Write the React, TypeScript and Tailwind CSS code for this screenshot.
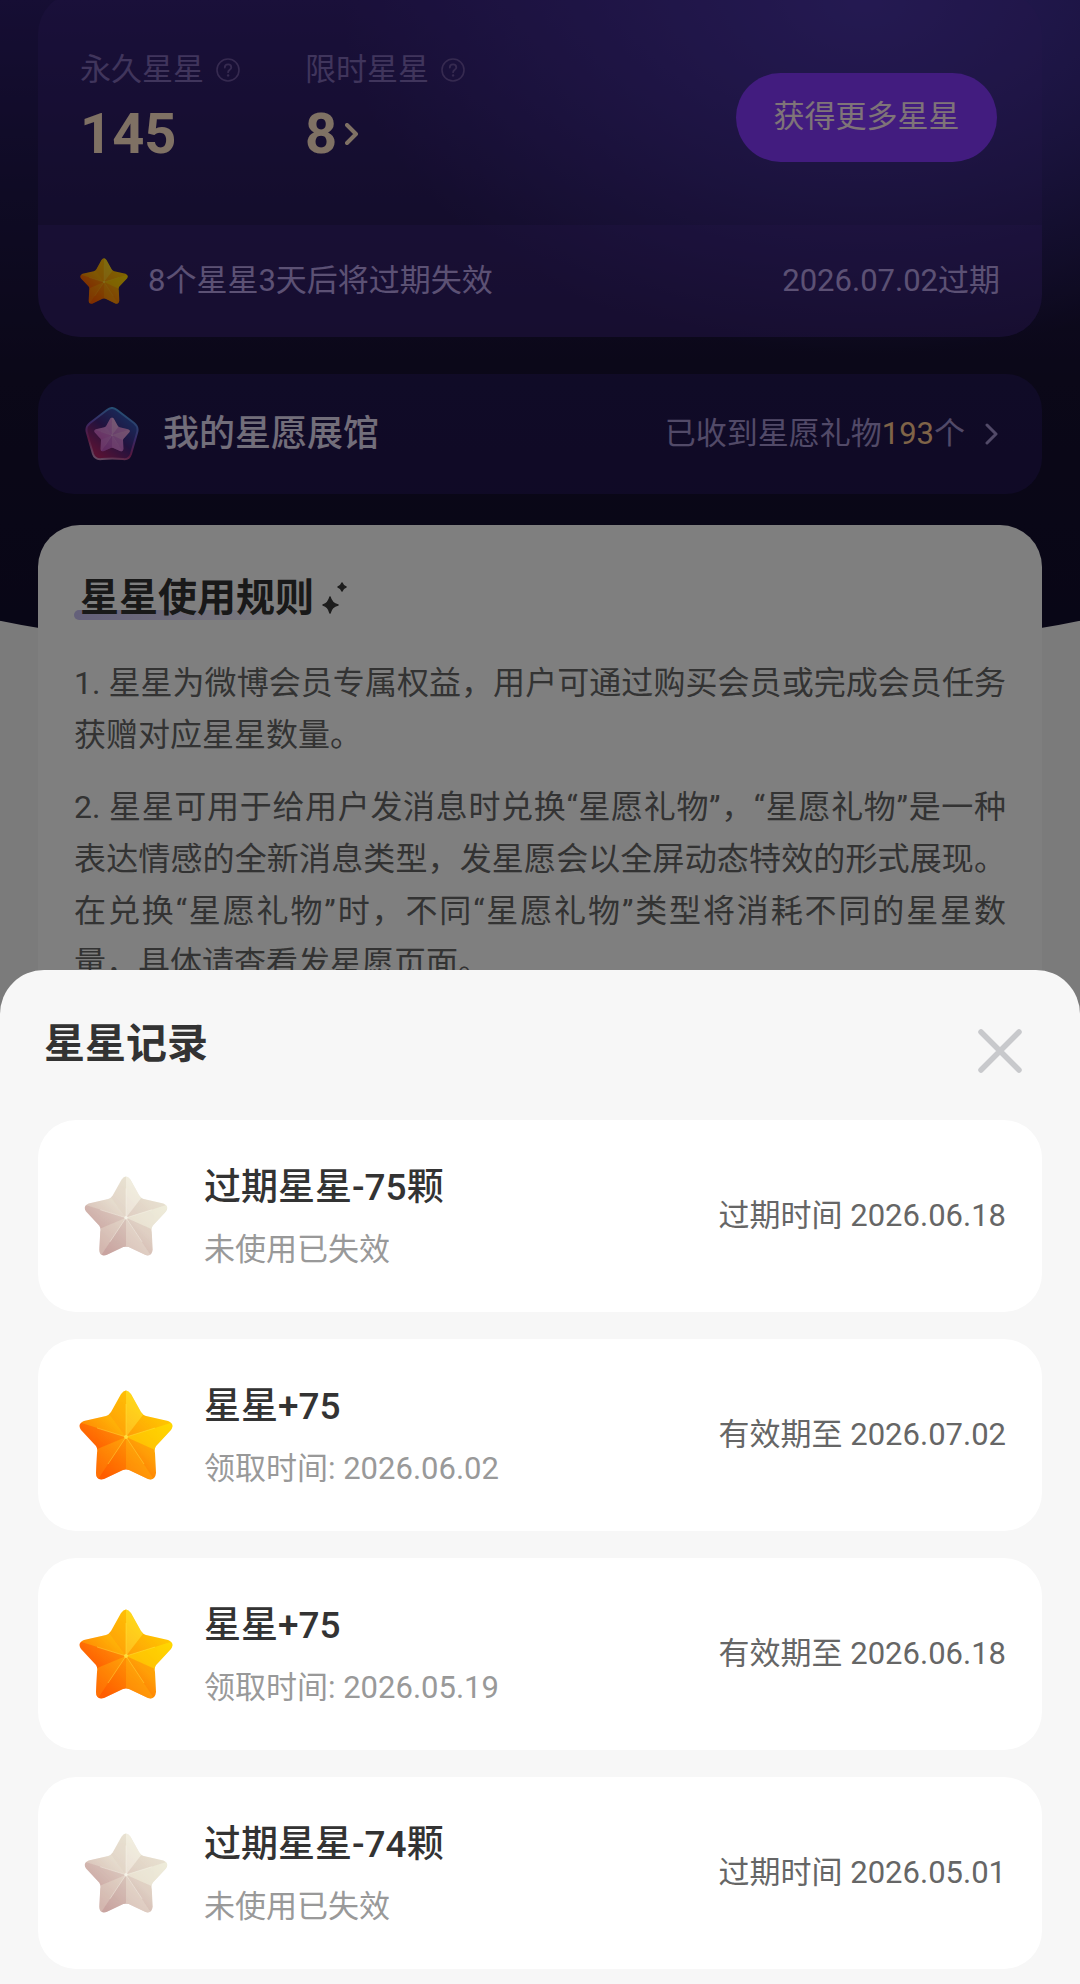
import React, { useId } from "react";

type StarTone = "gold" | "faded" | "pink";

const STAR_TONES: Record<StarTone, { from: string; mid: string; to: string; light: string; dark: string }> = {
  gold: { from: "#ffdc00", mid: "#ffa60a", to: "#ff4d00", light: "#ffec4a", dark: "#ff7a00" },
  faded: { from: "#efeedb", mid: "#e3d6c9", to: "#c9a29f", light: "#fbfaf0", dark: "#c8aaa2" },
  pink: { from: "#e8a8e0", mid: "#d884dc", to: "#d05cc4", light: "#f8d0f0", dark: "#a850c0" },
};

const StarIcon: React.FC<{ tone: StarTone; className?: string }> = ({ tone, className }) => {
  const id = useId();
  const t = STAR_TONES[tone];
  return (
    <svg viewBox="0 0 94 90" className={className} aria-hidden="true">
      <defs>
        <linearGradient id={`${id}-fill`} x1="0.8" y1="0.1" x2="0.12" y2="0.8">
          <stop offset="0" stopColor={t.from} />
          <stop offset="0.5" stopColor={t.mid} />
          <stop offset="1" stopColor={t.to} />
        </linearGradient>
        <clipPath id={`${id}-shape`}>
          <path d="M42 4Q47 -3 52 4L62 22Q64 25 67 26L89 31Q96 34 92 40L77 56Q75 59 76 63L77 83Q76 91 69 89L50 80Q47 79 44 80L25 89Q17 91 17 83L18 63Q19 59 17 56L2 40Q-2 34 5 31L27 26Q30 25 32 22Z" />
        </clipPath>
      </defs>
      <g clipPath={`url(#${id}-shape)`}>
        <rect width="94" height="90" fill={`url(#${id}-fill)`} />
        {/* Facets, clockwise from the top point */}
        <path d="M47 47L47 -4L64 25Z" fill={t.light} opacity="0.35" />
        <path d="M47 47L64 25L98 31Z" fill={t.dark} opacity="0.15" />
        <path d="M47 47L98 31L76 60Z" fill={t.from} opacity="0.5" />
        <path d="M47 47L76 60L78 94Z" fill={t.dark} opacity="0.15" />
        <path d="M47 47L78 94L47 79Z" fill={t.mid} opacity="0.5" />
        <path d="M47 47L47 79L16 94Z" fill={t.dark} opacity="0.35" />
        <path d="M47 47L16 94L18 59Z" fill={t.mid} opacity="0.4" />
        <path d="M47 47L18 59L-4 31Z" fill={t.to} opacity="0.25" />
        <path d="M47 47L-4 31L31 25Z" fill={t.from} opacity="0.2" />
        <path d="M47 47L31 25L47 -4Z" fill={t.mid} opacity="0.35" />
        <path
          d="M47 47V14M47 47L76 38M47 47L65 74M47 47L29 74M47 47L18 38"
          stroke={t.light}
          strokeWidth="1"
          opacity="0.4"
        />
        <circle cx="47" cy="47" r="2" fill={t.light} opacity="0.7" />
      </g>
    </svg>
  );
};

const GalleryIcon: React.FC = () => (
  <div className="relative h-[54px] w-[54px]">
    <svg viewBox="0 0 54 54" className="h-full w-full" aria-hidden="true">
      <defs>
        <linearGradient id="gem-edge" x1="0.7" y1="0" x2="0.3" y2="1">
          <stop offset="0" stopColor="#46a8e8" />
          <stop offset="0.45" stopColor="#7050c8" />
          <stop offset="0.75" stopColor="#b0307c" />
          <stop offset="1" stopColor="#c890c0" />
        </linearGradient>
        <linearGradient id="gem-body" x1="0.8" y1="0.1" x2="0.15" y2="0.85">
          <stop offset="0" stopColor="#3058b8" />
          <stop offset="0.5" stopColor="#43257c" />
          <stop offset="1" stopColor="#b02468" />
        </linearGradient>
      </defs>
      <path
        d="M22 3Q27 -1 32 3L49 16Q54 20 52 26L46 47Q44 53 38 52Q27 51 17 52Q10 53 8 47L2 26Q0 20 5 16Z"
        fill="url(#gem-body)"
        stroke="url(#gem-edge)"
        strokeWidth="2"
      />
    </svg>
    <StarIcon tone="pink" className="absolute left-[9px] top-[10px] h-[35px] w-[36px]" />
  </div>
);

const HelpIcon: React.FC = () => (
  <svg viewBox="0 0 24 24" className="h-6 w-6" fill="none" stroke="#6c54a0" aria-hidden="true">
    <circle cx="12" cy="12" r="11" strokeWidth="1.6" />
    <path
      d="M8.8 9.6C8.8 7.5 10 6.4 12.1 6.4S15.3 7.5 15.3 9.4C15.3 11.7 12.1 11.9 12.1 14.2"
      strokeWidth="1.8"
      strokeLinecap="round"
    />
    <circle cx="12.1" cy="17.4" r="1.2" fill="#6c54a0" stroke="none" />
  </svg>
);

const Chevron: React.FC<{ strokeWidth?: number }> = ({ strokeWidth = 3 }) => (
  <svg
    viewBox="0 0 14 22"
    className="h-[22px] w-[14px]"
    fill="none"
    stroke="currentColor"
    strokeWidth={strokeWidth}
    strokeLinecap="round"
    strokeLinejoin="round"
    aria-hidden="true"
  >
    <path d="M2 2L11 11L2 20" />
  </svg>
);

const SparkleIcon: React.FC = () => (
  <svg viewBox="0 0 26 32" className="h-8 w-[26px]" fill="#3a3a3a" stroke="#3a3a3a" strokeWidth="1.5" strokeLinejoin="round" aria-hidden="true">
    <path d="M8 15Q9.500 21.500 16 23Q9.500 24.500 8 31Q6.500 24.500 1 23Q6.500 21.500 8 15Z" />
    <path d="M20 1Q21 4 24 5Q21 6 20 9Q19 6 16 5Q19 4 20 1Z" />
  </svg>
);

interface StarRecord {
  title: string;
  note: string;
  date: string;
  expired: boolean;
}

const records: StarRecord[] = [
  { title: "过期星星-75颗", note: "未使用已失效", date: "过期时间 2026.06.18", expired: true },
  { title: "星星+75", note: "领取时间: 2026.06.02", date: "有效期至 2026.07.02", expired: false },
  { title: "星星+75", note: "领取时间: 2026.05.19", date: "有效期至 2026.06.18", expired: false },
  { title: "过期星星-74颗", note: "未使用已失效", date: "过期时间 2026.05.01", expired: true },
];

const BalanceCard: React.FC = () => (
  <section className="-mt-2 overflow-hidden rounded-[42px] bg-[#4a2a98]/25">
    <div className="flex h-[233px] items-start justify-between pl-[42px] pr-[45px] pt-[55px]">
      <div className="flex">
        <div className="w-[225px]">
          <button className="flex items-center gap-3 text-[31px] leading-[46px] text-[#806ab8]">
            永久星星
            <HelpIcon />
          </button>
          <p className="mt-2 text-[56px] font-bold leading-[66px] text-[#ffe2c8]">145</p>
        </div>
        <div>
          <button className="flex items-center gap-3 text-[31px] leading-[46px] text-[#806ab8]">
            限时星星
            <HelpIcon />
          </button>
          <button className="mt-2 flex items-center gap-2 text-[56px] font-bold leading-[66px] text-[#ffe2c8]">
            8
            <Chevron strokeWidth={4} />
          </button>
        </div>
      </div>
      <button className="mt-[26px] h-[89px] w-[261px] rounded-full bg-[#8438ff] text-[31px] text-[#ffe8f0]">
        获得更多星星
      </button>
    </div>
    <div className="flex h-[112px] items-center bg-[#4a2a98]/25 px-[42px] text-[31px] text-[#b9a3e8]">
      <StarIcon tone="gold" className="h-[46px] w-12" />
      <p className="ml-5 flex-1">8个星星3天后将过期失效</p>
      <p>2026.07.02过期</p>
    </div>
  </section>
);

const GalleryLink: React.FC = () => (
  <a
    href="#gallery"
    className="mt-[37px] flex h-[120px] items-center rounded-[36px] bg-[#4428a8]/25 pl-[47px] pr-[43px] text-[31px] text-[#a494d0]"
  >
    <GalleryIcon />
    <span className="ml-6 flex-1 text-[36px] font-medium text-[#e4dcf4]">我的星愿展馆</span>
    <span>
      已收到星愿礼物<span className="text-[#ffc890]">193</span>个
    </span>
    <span className="ml-5">
      <Chevron />
    </span>
  </a>
);

const RulesCard: React.FC = () => (
  <section className="mt-[31px] rounded-[42px] bg-white px-9 pb-12 pt-[45px]">
    <div className="flex items-center gap-2">
      <h2 className="relative z-0 pl-1.5 text-[39px] font-bold leading-[56px] text-[#333]">
        <span className="absolute bottom-1.5 left-0 -z-10 h-2.5 w-full rounded-full bg-linear-to-r from-[#c8c0f4] to-transparent" />
        星星使用规则
      </h2>
      <SparkleIcon />
    </div>
    <div className="mt-[31px] space-y-5 text-justify text-[32px] leading-[52px] text-[#666]">
      <p>1. 星星为微博会员专属权益，用户可通过购买会员或完成会员任务获赠对应星星数量。</p>
      <p>
        2. 星星可用于给用户发消息时兑换“星愿礼物”，“星愿礼物”是一种表达情感的全新消息类型，发星愿会以全屏动态特效的形式展现。在兑换“星愿礼物”时，不同“星愿礼物”类型将消耗不同的星星数量，具体请查看发星愿页面。
      </p>
    </div>
  </section>
);

const RecordRow: React.FC<{ record: StarRecord }> = ({ record }) => (
  <li className="flex h-48 items-center rounded-[38px] bg-white px-9">
    <div className="flex w-[104px] justify-center">
      <StarIcon
        tone={record.expired ? "faded" : "gold"}
        className={record.expired ? "h-20 w-[84px]" : "h-[90px] w-[94px]"}
      />
    </div>
    <div className="ml-[26px] flex-1 pt-1.5">
      <h3 className="text-[37px] font-medium leading-[54px] text-[#333]">{record.title}</h3>
      <p className="mt-2 text-[31px] leading-[54px] text-[#999]">{record.note}</p>
    </div>
    <p className="text-[31px] text-[#666]">{record.date}</p>
  </li>
);

const RecordSheet: React.FC = () => (
  <div
    role="dialog"
    aria-labelledby="record-title"
    className="fixed inset-x-0 bottom-0 rounded-t-[44px] bg-[#f7f7f7] px-[38px] pb-[15px]"
  >
    <div className="flex h-[150px] items-center justify-between pl-1.5 pr-5">
      <h2 id="record-title" className="text-[41px] font-bold text-[#333]">
        星星记录
      </h2>
      <button aria-label="关闭" className="mt-3">
        <svg viewBox="0 0 44 44" className="h-11 w-11" fill="none" stroke="#c8c9cc" strokeWidth="5.5" strokeLinecap="round">
          <path d="M3 3L41 41M41 3L3 41" />
        </svg>
      </button>
    </div>
    <ul className="space-y-[27px]">
      {records.map((record, i) => (
        <RecordRow key={i} record={record} />
      ))}
    </ul>
  </div>
);

export default function App() {
  return (
    <div className="relative h-screen overflow-hidden bg-[#f7f7f7] font-[Roboto,'Noto_Sans_CJK_SC',sans-serif]">
      {/* Night sky header with a curved bottom edge */}
      <div className="absolute -inset-x-[10%] top-0 h-[661px] rounded-b-[50%_90px] bg-[radial-gradient(ellipse_at_75%_0%,#4836a8_0%,transparent_38%),linear-gradient(180deg,#2c1c68_0%,#1e1648_30%,#161030_58%,#100c2c_100%)]" />
      <main className="relative px-[38px]">
        <BalanceCard />
        <GalleryLink />
        <RulesCard />
      </main>
      <div className="fixed inset-0 bg-black/50" />
      <RecordSheet />
    </div>
  );
}
